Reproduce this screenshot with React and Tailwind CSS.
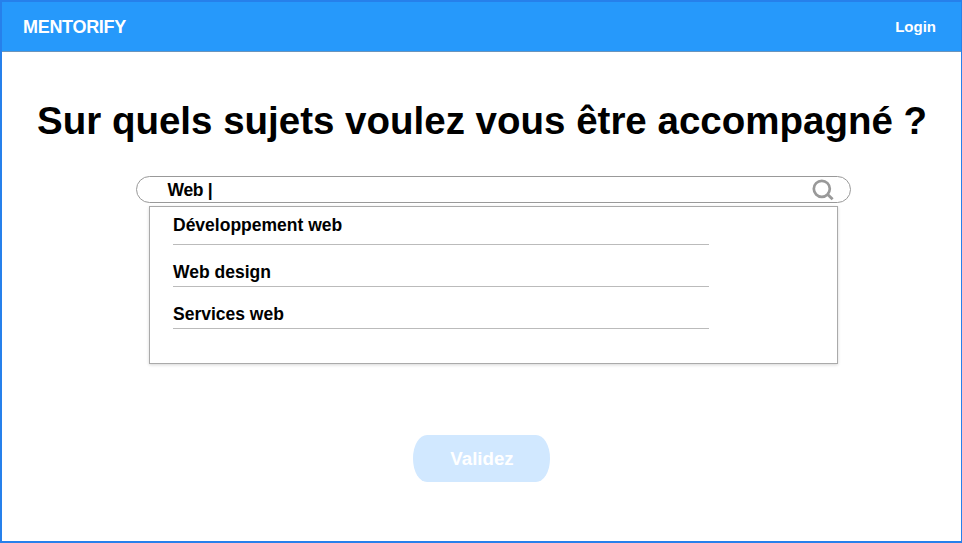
const suggestions = [
  { label: "Développement web", row: "h-[38px] pt-[7px]" },
  { label: "Web design", row: "h-[42px] pt-4" },
  { label: "Services web", row: "h-[42px] pt-4" },
];

function SearchIcon() {
  return (
    <svg className="h-6 w-6" viewBox="0 0 24 24" fill="none" stroke="#999999">
      <circle cx="10.8" cy="10.8" r="8" strokeWidth="2.7" />
      <path d="M16.4 16.3L21.6 21.2" strokeWidth="2.9" />
    </svg>
  );
}

export default function App() {
  return (
    <div className="flex h-[543px] w-[962px] flex-col overflow-hidden border-2 border-r border-[#2680eb] bg-white font-['Liberation_Sans',Arial,sans-serif] font-bold text-black">
      <header className="flex h-[50px] shrink-0 items-center justify-between border-b border-[#6b94bb] bg-[#2699fb] pr-[25px] pl-[21px] text-white">
        <span className="text-[18px] leading-5 tracking-[-0.3px]">MENTORIFY</span>
        <a className="text-[15px] leading-5">Login</a>
      </header>
      <main className="flex flex-col">
        <h1 className="mt-[46px] pl-[35px] text-[38.5px] leading-[46px] whitespace-nowrap">
          Sur quels sujets voulez vous être accompagné ?
        </h1>
        <div className="mt-8 ml-[134px] flex h-[27px] w-[715px] items-center justify-between rounded-full border border-[#999999] pr-[15px] pl-[30.5px]">
          <span className="text-[17.5px] leading-5 tracking-[-0.3px]">Web |</span>
          <SearchIcon />
        </div>
        <ul className="mt-[3px] ml-[147px] h-[158px] w-[689px] border border-[#aaaaaa] pl-[23px] shadow-[0_1px_3px_rgba(0,0,0,0.16)]">
          {suggestions.map((s) => (
            <li
              key={s.label}
              className={`${s.row} w-[536px] border-b border-[#bbbbbb] text-[17.5px] leading-[22px]`}
            >
              {s.label}
            </li>
          ))}
        </ul>
        <button className="mt-[71px] ml-[411px] h-[47px] w-[137px] rounded-[14px/23px] bg-[#d1e8ff] pt-px pl-px text-[18.7px] text-white">
          Validez
        </button>
      </main>
    </div>
  );
}
